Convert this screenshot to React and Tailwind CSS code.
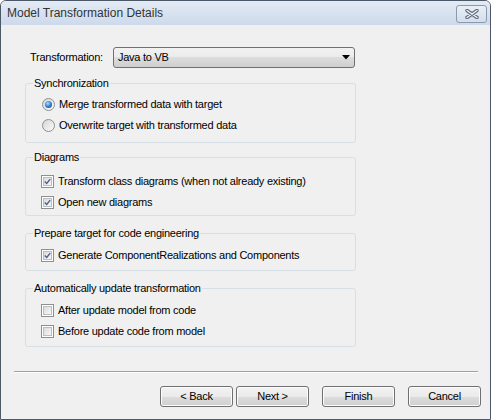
import React from 'react';

const Radio = ({ checked, label }) => (
  <div className="flex h-[21px] items-center">
    <span className="ml-[16px] flex h-[13px] w-[13px] items-center justify-center rounded-full border border-[#8e8f8f] bg-gradient-to-br from-[#d6d6d6] to-[#fbfbfb]">
      {checked && (
        <span className="h-[7px] w-[7px] rounded-full bg-[radial-gradient(circle_at_40%_35%,#a9dcff,#2a78c8_55%,#0e3f82)]" />
      )}
    </span>
    <span className="ml-[4px]">{label}</span>
  </div>
);

const Check = ({ checked, label }) => (
  <div className="flex h-[21px] items-center">
    <span className="ml-[15px] flex h-[13px] w-[13px] items-center justify-center border border-[#8f8f8f] bg-white p-px">
      <span className="flex h-full w-full items-center justify-center border border-[#b9bec5] bg-gradient-to-br from-[#dcdcdc] to-[#f7f7f7]">
        {checked && (
          <svg width="9" height="9" viewBox="0 0 9 9">
            <path d="M1 4.5 L3.5 7 L8 1.5" fill="none" stroke="#4a5f8c" strokeWidth="1.8" />
          </svg>
        )}
      </span>
    </span>
    <span className="ml-[4px]">{label}</span>
  </div>
);

const Group = ({ title, className, children }) => (
  <fieldset className={`w-[331px] rounded-[3px] border border-[#d5dfe5] ${className}`}>
    <legend className="ml-[7px] px-px leading-[13px]">{title}</legend>
    {children}
  </fieldset>
);

const Button = ({ children, className = '' }) => (
  <button className={`h-[21px] w-[73px] rounded-[3px] border border-[#707070] bg-[linear-gradient(#f2f2f2,#ebebeb_50%,#dddddd_50%,#cfcfcf)] shadow-[inset_0_0_0_1px_#fcfcfc] text-black ${className}`}>
    {children}
  </button>
);

export default function App() {
  return (
    <div className="h-[420px] w-[492px] bg-white font-['Liberation_Sans',Arial,sans-serif] text-[11px] tracking-[-0.25px] text-black">
      <div className="flex h-full w-[491px] flex-col rounded-t-[6px] border border-[#4d5866] bg-[#f0f0f0]">
        {/* Title bar */}
        <div className="flex h-[24px] items-center justify-between rounded-t-[5px] bg-gradient-to-b from-[#e3ebf5] to-[#cddaeb] pl-[6px] pr-[3px]">
          <span className="text-[12px] tracking-normal text-[#333]">Model Transformation Details</span>
          <span className="mt-[2px] flex h-[18px] w-[31px] items-center justify-center rounded-[3px] border border-[#8a99ad] bg-gradient-to-b from-[#e9eff7] to-[#d3deec]">
            <svg width="14" height="10" viewBox="0 0 14 10">
              <path d="M2 1.5 L12 8.5 M12 1.5 L2 8.5" stroke="#5b6678" strokeWidth="3.4" strokeLinecap="round" />
              <path d="M2 1.5 L12 8.5 M12 1.5 L2 8.5" stroke="#f4f6f9" strokeWidth="1.4" strokeLinecap="round" />
            </svg>
          </span>
        </div>

        {/* Body */}
        <div className="flex flex-1 flex-col">
          <div className="flex flex-col pl-[24px]">
            <div className="mt-[22px] flex h-[21px] items-center">
              <span className="ml-[5px] w-[83px]">Transformation:</span>
              <div className="flex h-[21px] w-[242px] items-center justify-between rounded-[3px] border border-[#707070] bg-[linear-gradient(#f2f2f2,#ebebeb_50%,#dddddd_50%,#cfcfcf)] pl-[4px] pr-[4px]">
                <span>Java to VB</span>
                <svg width="8" height="5" viewBox="0 0 8 5">
                  <path d="M0 0 H8 L4 4.5 Z" fill="#000" />
                </svg>
              </div>
            </div>

            <Group title="Synchronization" className="mt-[9px] pb-[6px]">
              <div className="mt-[4px]">
                <Radio checked label="Merge transformed data with target" />
                <Radio label="Overwrite target with transformed data" />
              </div>
            </Group>

            <Group title="Diagrams" className="mt-[8px] pb-[2px]">
              <div className="mt-[7px]">
                <Check checked label="Transform class diagrams (when not already existing)" />
                <Check checked label="Open new diagrams" />
              </div>
            </Group>

            <Group title="Prepare target for code engineering" className="mt-[11px] pb-[4px]">
              <div className="mt-[5px]">
                <Check checked label="Generate ComponentRealizations and Components" />
              </div>
            </Group>

            <Group title="Automatically update transformation" className="mt-[11px] pb-[4px]">
              <div className="mt-[5px]">
                <Check label="After update model from code" />
                <Check label="Before update code from model" />
              </div>
            </Group>
          </div>

          <div className="ml-[13px] mt-[24px] h-px w-[464px] bg-[#a0a0a0] shadow-[0_1px_0_#ffffff]" />

          <div className="mt-[14px] flex pl-[159px]">
            <Button>&lt; Back</Button>
            <Button className="ml-[3px]">Next &gt;</Button>
            <Button className="ml-[13px]">Finish</Button>
            <Button className="ml-[13px]">Cancel</Button>
          </div>
        </div>
      </div>
    </div>
  );
}
